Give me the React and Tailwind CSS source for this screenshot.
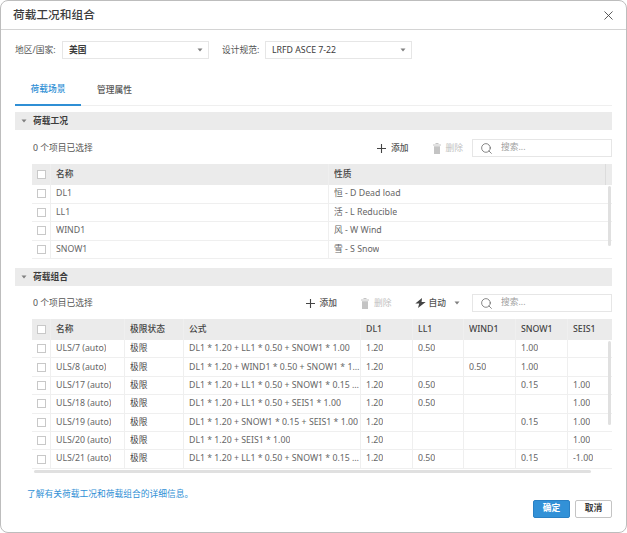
import { Search, X } from 'lucide-react';

const FONT = "font-['Noto_Sans','Noto_Sans_CJK_SC',sans-serif]";

const caseRows = [
  ['DL1', '恒 - D Dead load'],
  ['LL1', '活 - L Reducible'],
  ['WIND1', '风 - W Wind'],
  ['SNOW1', '雪 - S Snow'],
];

const comboRows = [
  ['ULS/7 (auto)', 'DL1 * 1.20 + LL1 * 0.50 + SNOW1 * 1.00', '1.20', '0.50', '', '1.00', ''],
  ['ULS/8 (auto)', 'DL1 * 1.20 + WIND1 * 0.50 + SNOW1 * 1.00', '1.20', '', '0.50', '1.00', ''],
  ['ULS/17 (auto)', 'DL1 * 1.20 + LL1 * 0.50 + SNOW1 * 0.15 + SEIS1 * 1.00', '1.20', '0.50', '', '0.15', '1.00'],
  ['ULS/18 (auto)', 'DL1 * 1.20 + LL1 * 0.50 + SEIS1 * 1.00', '1.20', '0.50', '', '', '1.00'],
  ['ULS/19 (auto)', 'DL1 * 1.20 + SNOW1 * 0.15 + SEIS1 * 1.00', '1.20', '', '', '0.15', '1.00'],
  ['ULS/20 (auto)', 'DL1 * 1.20 + SEIS1 * 1.00', '1.20', '', '', '', '1.00'],
  ['ULS/21 (auto)', 'DL1 * 1.20 + LL1 * 0.50 + SNOW1 * 0.15 + SEIS1 * -1.00', '1.20', '0.50', '', '0.15', '-1.00'],
];

const comboHead = 'grid-cols-[18px_74px_59px_177px_52px_51px_52px_52px_45px]';
const comboBody = 'grid-cols-[18px_74px_59px_177px_52px_51px_52px_52px_38px]';

function Caret({ className = '' }) {
  return (
    <svg width="6" height="4" viewBox="0 0 6 4" className={className}>
      <path d="M0.5 0.5h5L3 3.5z" fill="#808080" />
    </svg>
  );
}

function Checkbox() {
  return <span className="block h-[9px] w-[9px] border border-[#c8c8c8] bg-white" />;
}

function Select({ value, bold }) {
  return (
    <div className="flex h-[18px] w-[147px] items-center justify-between border border-[#e6e6e6] pl-[6px] pr-[5px]">
      <span className={`pt-[1px] text-[8.75px] text-[#3c3c3c] ${bold ? 'font-bold' : ''}`}>{value}</span>
      <Caret />
    </div>
  );
}

function Section({ title }) {
  return (
    <div className="flex h-[18px] items-center bg-[#ebebeb] pl-[6px] text-[8.75px] font-bold text-[#3c3c3c]">
      <Caret className="mr-[6px]" />
      <span className="pt-[2px]">{title}</span>
    </div>
  );
}

function PlusIcon() {
  return (
    <svg width="9" height="9" viewBox="0 0 9 9">
      <path d="M4.5 0v9M0 4.5h9" stroke="#444" strokeWidth="1.1" />
    </svg>
  );
}

function TrashIcon() {
  return (
    <svg width="8" height="11" viewBox="0 0 8 11">
      <path d="M2.5 0.5h3M0 2h8" stroke="#c4c4c4" strokeWidth="1" />
      <path d="M1 3.2h6V11H1z" fill="#c4c4c4" />
    </svg>
  );
}

function Bolt() {
  return (
    <svg width="11" height="10" viewBox="0 0 11 10">
      <path d="M7 0L0.3 5.6h3.9L3 10l7.7-5.9H6.6z" fill="#444" />
    </svg>
  );
}

function SearchBox() {
  return (
    <div className="flex h-[18px] w-[140px] items-center border border-[#e6e6e6] pl-[7px] text-[8.75px] text-[#a0a0a0]">
      <Search size={13} strokeWidth={1.3} color="#555" className="mr-[8px]" />
      搜索...
    </div>
  );
}

function Toolbar({ top, auto }) {
  return (
    <div className={`${top} flex h-[18px] items-center pl-[18px] text-[8.75px] text-[#555]`}>
      <span className="pt-[2px]">0 个项目已选择</span>
      <div className="ml-auto flex items-center gap-[5px] font-medium text-[#555]">
        <PlusIcon />
        <span className="pt-[2px]">添加</span>
      </div>
      <div className="ml-[24px] flex items-center gap-[5px] text-[#c0c0c0]">
        <TrashIcon />
        <span className="pt-[2px]">删除</span>
      </div>
      {auto && (
        <div className="ml-[23px] flex items-center gap-[3px] font-medium text-[#555]">
          <Bolt />
          <span className="pt-[2px]">自动</span>
          <Caret className="ml-[5px]" />
        </div>
      )}
      <div className={auto ? 'ml-[12px]' : 'ml-[9px]'}>
        <SearchBox />
      </div>
    </div>
  );
}

function Cell({ children, first, className = '' }) {
  return (
    <div
      className={`flex items-center overflow-hidden pl-[5px] ${first ? '' : 'border-l border-[#efefef]'} ${className}`}
    >
      <span className="truncate">{children}</span>
    </div>
  );
}

export default function App() {
  return (
    <div className={`${FONT} flex h-[533px] w-[627px] flex-col overflow-hidden rounded-lg border border-[#bdbdbd] bg-white`}>
      {/* Title */}
      <div className="flex h-[29px] shrink-0 items-center justify-between border-b border-[#d4d4d4] pl-[12px] pr-[10px]">
        <span className="text-[11.7px] font-medium text-[#3c3c3c]">荷载工况和组合</span>
        <X size={15} strokeWidth={1.4} color="#444" />
      </div>

      <div className="flex flex-1 flex-col pl-[14px] pr-[14px]">
        {/* Region and code */}
        <div className="mt-[11px] flex items-center text-[8.75px] text-[#555]">
          <span className="w-[47px] pt-[1px]">地区/国家:</span>
          <Select value="美国" bold />
          <span className="ml-[13px] w-[43px] pt-[1px]">设计规范:</span>
          <Select value="LRFD ASCE 7-22" />
        </div>

        {/* Tabs */}
        <div className="mt-[20px] flex h-[27px] border-b border-[#efefef] text-[8.75px] font-medium">
          <div className="-mb-px flex w-[66px] items-center justify-center border-b-2 border-[#2f8fd5] pb-[3px] text-[#2f8fd5]">
            荷载场景
          </div>
          <div className="flex items-center pb-[3px] pl-[16px] text-[#555]">管理属性</div>
        </div>

        <div className="mt-[6px]">
          <Section title="荷载工况" />
        </div>
        <Toolbar top="mt-[9px]" />

        {/* Load cases */}
        <div className="relative ml-[17px] mt-[7px] h-[96px] overflow-hidden text-[8.75px] text-[#666]">
          <div className="grid h-[21px] grid-cols-[18px_278px_277px_7px] bg-[#ebebeb] font-medium text-[#444]">
            <div className="flex items-center justify-center"><Checkbox /></div>
            <Cell className="border-[#dcdcdc]">名称</Cell>
            <Cell className="border-[#dcdcdc]">性质</Cell>
            <div className="border-l border-[#dcdcdc]" />
          </div>
          {caseRows.map((r) => (
            <div key={r[0]} className="grid h-[18.5px] grid-cols-[18px_278px_277px] border-b border-[#efefef]">
              <div className="flex items-center justify-center"><Checkbox /></div>
              <Cell>{r[0]}</Cell>
              <Cell>{r[1]}</Cell>
            </div>
          ))}
          <div className="absolute right-[1px] top-[22px] h-[60px] w-[3px] rounded-sm bg-[#e0e0e0]" />
        </div>

        <div className="mt-[8px]">
          <Section title="荷载组合" />
        </div>
        <Toolbar top="mt-[8px]" auto />

        {/* Load combinations */}
        <div className="relative ml-[17px] mt-[7px] h-[154px] overflow-hidden text-[8.75px] text-[#666]">
          <div className={`grid h-[21px] ${comboHead} bg-[#ebebeb] font-medium text-[#444]`}>
            <div className="flex items-center justify-center"><Checkbox /></div>
            {['名称', '极限状态', '公式', 'DL1', 'LL1', 'WIND1', 'SNOW1', 'SEIS1'].map((h) => (
              <Cell key={h} className="border-[#dcdcdc]">{h}</Cell>
            ))}
          </div>
          {comboRows.map((r) => (
            <div key={r[0]} className={`grid h-[18.4px] ${comboBody} border-b border-[#efefef]`}>
              <div className="flex items-center justify-center"><Checkbox /></div>
              <Cell>{r[0]}</Cell>
              <Cell className="text-[#444]">极限</Cell>
              {r.slice(1).map((v, i) => (
                <Cell key={i}>{v}</Cell>
              ))}
            </div>
          ))}
          <div className="absolute right-[1px] top-[22px] h-[84px] w-[3px] rounded-sm bg-[#e0e0e0]" />
          <div className="absolute bottom-0 left-[2px] h-[3px] w-[557px] rounded-sm bg-[#e0e0e0]" />
        </div>

        {/* Footer */}
        <div className="mt-[15px] flex items-start">
          <span className="ml-[12px] text-[8.75px] text-[#2f8fd5]">了解有关荷载工况和荷载组合的详细信息。</span>
          <div className="ml-auto mt-[12px] flex gap-[5px] text-[8.75px] font-bold">
            <button className="h-[18px] w-[37px] rounded-[2px] border border-[#2a80c4] bg-[#3291d7] text-white">确定</button>
            <button className="h-[18px] w-[37px] rounded-[2px] border border-[#c4c4c4] bg-white text-[#3c3c3c]">取消</button>
          </div>
        </div>
      </div>
    </div>
  );
}
